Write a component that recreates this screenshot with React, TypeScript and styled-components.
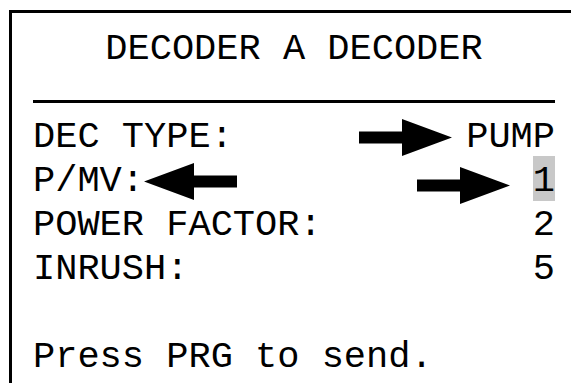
import React from 'react';
import styled, { createGlobalStyle } from 'styled-components';

const GlobalStyle = createGlobalStyle`
  html, body {
    margin: 0;
    padding: 0;
    background: #fff;
    overflow: hidden;
  }
`;

const Screen = styled.div`
  width: 571px;
  height: 383px;
  overflow: hidden;
  background: #fff;
`;

const Frame = styled.div`
  margin: 10px 0 0 9px;
  width: 620px;
  height: 420px;
  border: 3px solid #000;
  box-sizing: border-box;
  padding: 14px 0 0 21px;
  font-family: 'Liberation Mono', 'Courier New', monospace;
  font-size: 37px;
  line-height: 44px;
  color: #000;
`;

const Content = styled.div`
  width: 522px;
  display: flex;
  flex-direction: column;
`;

const Title = styled.div`
  text-align: center;
  white-space: pre;
`;

const Rule = styled.div`
  height: 3px;
  background: #000;
  margin: 29px 0 12px;
`;

const Row = styled.div`
  display: flex;
  justify-content: space-between;
  align-items: center;
  height: 44px;
  white-space: pre;
`;

const Group = styled.div`
  display: flex;
  align-items: center;
`;

const Blank = styled.div`
  height: 44px;
`;

const Value = styled.span<{ $selected?: boolean }>`
  display: block;
  ${(p) =>
    p.$selected &&
    `
    background: #c8c8c8;
    line-height: 39px;
    padding-top: 6px;
    margin-top: -6px;
  `}
`;

const ArrowSvg = styled.svg<{ $gap: number; $drop: number }>`
  display: block;
  flex: none;
  margin-left: ${(p) => (p.$gap < 0 ? 0 : 0)}px;
  margin-right: ${(p) => p.$gap}px;
  margin-top: ${(p) => p.$drop * 2}px;
`;

const Arrow: React.FC<{ dir: 'left' | 'right'; gap?: number; drop?: number }> = ({
  dir,
  gap = 0,
  drop = 0,
}) => (
  <ArrowSvg width="93" height="37" viewBox="0 0 93 37" $gap={gap} $drop={drop}>
    <path
      d="M0 12.5 H43 V0 L93 18.5 L43 37 V24.5 H0 Z"
      fill="#000"
      transform={dir === 'left' ? 'translate(93 0) scale(-1 1)' : undefined}
    />
  </ArrowSvg>
);

const App: React.FC = () => {
  return (
    <Screen>
      <GlobalStyle />
      <Frame>
        <Content>
          <Title>DECODER A DECODER</Title>
          <Rule />
          <Row>
            <span>DEC TYPE:</span>
            <Group>
              <Arrow dir="right" gap={14} />
              <Value>PUMP</Value>
            </Group>
          </Row>
          <Row>
            <Group>
              <span>P/MV:</span>
              <Arrow dir="left" />
            </Group>
            <Group>
              <Arrow dir="right" gap={23} drop={4} />
              <Value $selected>1</Value>
            </Group>
          </Row>
          <Row>
            <span>POWER FACTOR:</span>
            <Value>2</Value>
          </Row>
          <Row>
            <span>INRUSH:</span>
            <Value>5</Value>
          </Row>
          <Blank />
          <Row>
            <span>Press PRG to send.</span>
          </Row>
        </Content>
      </Frame>
    </Screen>
  );
};

export default App;
